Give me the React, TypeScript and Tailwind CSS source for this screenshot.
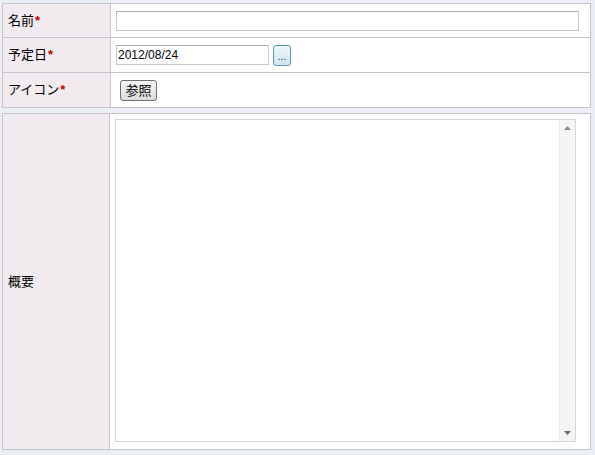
import React from 'react'

const labelCls =
  'w-[108px] border border-[#c4c4cc] bg-[#f1ebef] pl-[5px] text-left align-middle text-[13px] font-normal text-black'
const valueCls = 'border border-[#c4c4cc] bg-white pl-[5px] pr-[11px] align-middle'

function Req() {
  return <span className="ml-[1px] font-bold text-[#c00000]">*</span>
}

export default function App() {
  return (
    <div
      className="h-[455px] w-[595px] overflow-hidden bg-[#eceef6] pl-[2px] pt-[3px]"
      style={{ fontFamily: '"Liberation Sans", "Noto Sans CJK JP", sans-serif' }}
    >
      <table className="w-[589px] border-collapse">
        <tbody>
          <tr className="h-[34px]">
            <th className={labelCls}>
              名前<Req />
            </th>
            <td className={valueCls}>
              <input
                type="text"
                className="block h-[20px] w-full border border-[#c9c9c9] border-t-[#a9a9a9] bg-white outline-none"
              />
            </td>
          </tr>
          <tr className="h-[35px]">
            <th className={labelCls}>
              予定日<Req />
            </th>
            <td className={valueCls}>
              <div className="flex items-center gap-[4px]">
                <input
                  type="text"
                  defaultValue="2012/08/24"
                  className="block h-[20px] w-[153px] border border-[#c9c9c9] border-t-[#a9a9a9] bg-white px-[1px] text-[12px] text-black outline-none"
                />
                <button className="flex h-[21px] w-[18px] items-end justify-center rounded-[3px] border border-[#5b9ab5] bg-gradient-to-b from-[#eef6fa] to-[#cfe3ee] pb-[3px] text-[10px] leading-none text-[#333]">
                  ...
                </button>
              </div>
            </td>
          </tr>
          <tr className="h-[35px]">
            <th className={labelCls}>
              アイコン<Req />
            </th>
            <td className={valueCls}>
              <button className="ml-[4px] h-[21px] w-[37px] rounded-[3px] border border-[#707070] bg-gradient-to-b from-[#f4f4f4] to-[#dcdcdc] text-[13px] leading-none text-black">
                参照
              </button>
            </td>
          </tr>
        </tbody>
      </table>
      <table className="mt-[5px] w-[589px] border-collapse">
        <tbody>
          <tr className="h-[336px]">
            <th className={labelCls}>概要</th>
            <td className="border border-[#c4c4cc] bg-white py-[5px] pl-[5px] pr-[14px] align-top">
              <div className="flex h-[323px] w-[461px] border border-[#d6d6d6]">
                <textarea className="h-full flex-1 resize-none bg-white outline-none" />
                <div className="flex w-[16px] flex-col justify-between border-l border-[#ebebeb] bg-[#f5f5f5]">
                  <div className="flex h-[16px] items-center justify-center">
                    <svg width="7" height="4" viewBox="0 0 7 4">
                      <path d="M3.5 0 L7 4 L0 4 Z" fill="#8a8a8a" />
                    </svg>
                  </div>
                  <div className="flex h-[16px] items-center justify-center">
                    <svg width="7" height="4" viewBox="0 0 7 4">
                      <path d="M0 0 L7 0 L3.5 4 Z" fill="#6a6a6a" />
                    </svg>
                  </div>
                </div>
              </div>
            </td>
          </tr>
        </tbody>
      </table>
    </div>
  )
}
